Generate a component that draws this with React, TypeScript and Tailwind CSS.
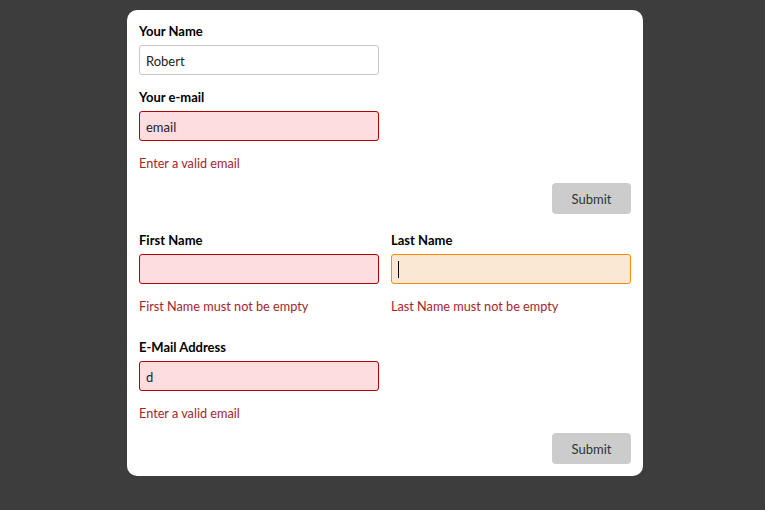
import React from "react";

const font = { fontFamily: "Lato, 'Liberation Sans', sans-serif" };

function Label({ children, className = "" }: { children: React.ReactNode; className?: string }) {
  return <div className={`h-[18px] leading-[18px] text-[13px] font-bold text-black ${className}`}>{children}</div>;
}

function Field({
  value,
  variant,
  caret,
}: {
  value?: string;
  variant: "normal" | "error" | "focus";
  caret?: boolean;
}) {
  const cls =
    variant === "normal"
      ? "bg-white border-[#c8c8c8]"
      : variant === "error"
      ? "bg-[#fddddd] border-[#b30000]"
      : "bg-[#fbe8d4] border-[#ff8c00]";
  return (
    <div className={`mt-[5px] h-[30px] w-[240px] rounded-[3px] border flex items-center pl-[6px] text-[13px] text-[#222] ${cls}`}>
      {value && <span className="inline-block pt-[3px]">{value}</span>}
      {caret && <span className="block w-px h-[17px] bg-black" />}
    </div>
  );
}

function ErrorText({ children }: { children: React.ReactNode }) {
  return <div className="mt-[13px] h-[18px] leading-[18px] text-[12.7px] text-[#a4262c]">{children}</div>;
}

function SubmitRow() {
  return (
    <div className="mt-[11px] flex justify-end">
      <div className="h-[31px] w-[79px] rounded-[4px] bg-[#cccccc] text-[#333] text-[13px] flex items-center justify-center">
        <span className="inline-block pt-[3px]">Submit</span>
      </div>
    </div>
  );
}

export default function App() {
  return (
    <div className="w-[765px] h-[510px] bg-[#3d3d3d] flex" style={font}>
      <div className="ml-[127px] mt-[10px] w-[516px] h-[466px] bg-white rounded-[10px] p-[12px] self-start">
        <Label>Your Name</Label>
        <Field value="Robert" variant="normal" />
        <Label className="mt-[13px]">Your e-mail</Label>
        <Field value="email" variant="error" />
        <ErrorText>Enter a valid email</ErrorText>
        <SubmitRow />

        <div className="mt-[17px] flex gap-[12px]">
          <div className="w-[240px]">
            <Label>First Name</Label>
            <Field variant="error" />
            <ErrorText>First Name must not be empty</ErrorText>
          </div>
          <div className="w-[240px]">
            <Label>Last Name</Label>
            <Field variant="focus" caret />
            <ErrorText>Last Name must not be empty</ErrorText>
          </div>
        </div>

        <Label className="mt-[23px]">E-Mail Address</Label>
        <Field value="d" variant="error" />
        <ErrorText>Enter a valid email</ErrorText>
        <SubmitRow />
      </div>
    </div>
  );
}
